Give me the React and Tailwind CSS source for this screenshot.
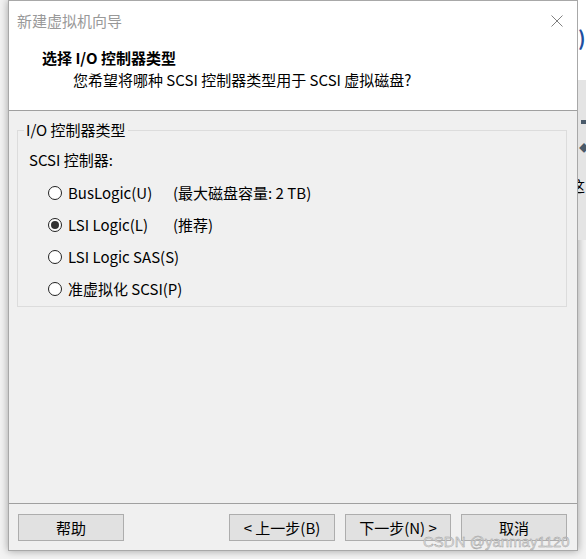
import React from "react";

const font = { fontFamily: '"Noto Sans CJK SC", "Noto Sans", sans-serif' };

function Radio({ checked, label, note }) {
  return (
    <div className="flex h-[32px] items-center whitespace-nowrap pl-[30px]">
      <span className="flex h-[14px] w-[14px] shrink-0 items-center justify-center rounded-full border border-[#222222] bg-white">
        {checked && <span className="h-[8px] w-[8px] rounded-full bg-[#333333]" />}
      </span>
      <span className="ml-[6px] w-[105px] shrink-0 leading-[20px]">{label}</span>
      {note && <span className="leading-[20px]">{note}</span>}
    </div>
  );
}

function Button({ children }) {
  return (
    <button className="flex h-[27px] w-[106px] items-center justify-center whitespace-nowrap border border-[#adadad] bg-[#e1e1e1] text-[15px] leading-[20px] text-black">
      {children}
    </button>
  );
}

export default function App() {
  return (
    <div
      className="relative h-[559px] w-[586px] overflow-hidden bg-[#f3f3f3] text-[15px] text-black"
      style={font}
    >
      {/* window behind the dialog, only its edge shows */}
      <div className="absolute left-[578px] top-0 h-[80px] w-[8px] overflow-hidden bg-white">
        <span className="absolute left-[0px] top-[26px] text-[20px] font-bold leading-[24px] text-[#1e4fa0]">)</span>
      </div>
      <div className="absolute left-[578px] top-[80px] h-[160px] w-[8px] overflow-hidden bg-[#e4e4e4]">
        <span className="absolute left-[3px] top-[40px] h-[4px] w-[5px] bg-[#4a5a6a]" />
        <span className="absolute left-[1px] top-[62px] text-[10px] leading-[12px] text-[#4a5a6a]">◆</span>
        <span className="absolute left-[-8px] top-[96px] text-[15px] leading-[20px]">这</span>
      </div>

      <div className="ml-[8px] flex h-[551px] w-[570px] flex-col border border-[#a8a8a8] bg-[#f0f0f0] shadow-[0_0_8px_rgba(0,0,0,0.35)]">
        <div className="h-[109px] bg-white">
          <div className="flex h-[40px] items-center justify-between pl-[8px] pr-[14px]">
            <span className="leading-[20px] text-[#999999]">新建虚拟机向导</span>
            <svg width="12" height="12" viewBox="0 0 12 12" fill="none" stroke="#808080" strokeWidth="1">
              <path d="M0.5 0.5 L11.5 11.5 M11.5 0.5 L0.5 11.5" />
            </svg>
          </div>
          <div className="mt-[7px] pl-[33px] font-bold leading-[20px]">选择 I/O 控制器类型</div>
          <div className="mt-[2px] pl-[64px] leading-[20px]">
            您希望将哪种 SCSI 控制器类型用于 SCSI 虚拟磁盘?
          </div>
        </div>
        <div className="h-px bg-[#a0a0a0]" />

        <div className="flex-1 pt-[9px]">
          <fieldset className="ml-[8px] h-[187px] w-[550px] border border-[#dcdcdc]">
            <legend className="ml-[6px] px-[2px] leading-[20px]">I/O 控制器类型</legend>
            <div className="mt-[10px] pl-[11px] leading-[20px]">SCSI 控制器:</div>
            <div className="mt-[7px]">
              <Radio label="BusLogic(U)" note="(最大磁盘容量: 2 TB)" />
              <Radio checked label="LSI Logic(L)" note="(推荐)" />
              <Radio label="LSI Logic SAS(S)" />
              <Radio label="准虚拟化 SCSI(P)" />
            </div>
          </fieldset>
        </div>

        <div className="h-px bg-[#a0a0a0]" />
        <div className="flex h-[46px] items-start pl-[9px] pr-[10px] pt-[10px]">
          <Button>帮助</Button>
          <div className="flex-1" />
          <div className="flex gap-[10px]">
            <Button>&lt; 上一步(B)</Button>
            <Button>下一步(N) &gt;</Button>
            <Button>取消</Button>
          </div>
        </div>
      </div>

      <span
        className="absolute left-[423px] top-[531px] text-[15px] leading-[22px] text-[#dcdcdc] [-webkit-text-stroke:0.4px_#9a9a9a]"
        style={{ fontFamily: '"Liberation Sans", Arial, sans-serif' }}
      >
        CSDN @yanmay1120
      </span>
    </div>
  );
}
